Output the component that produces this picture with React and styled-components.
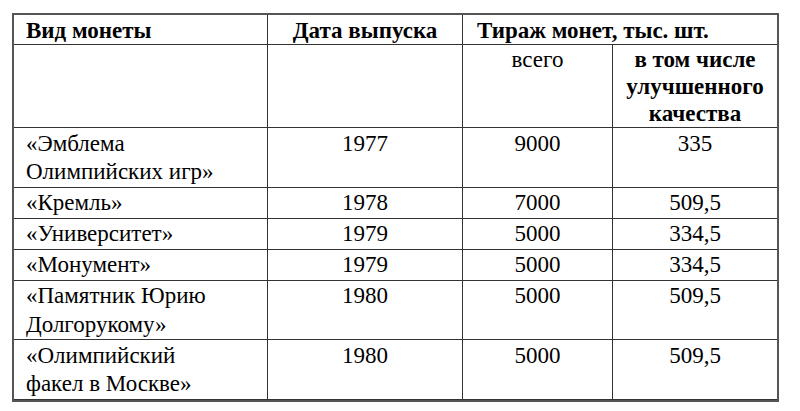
import React from "react";
import styled, { createGlobalStyle } from "styled-components";

const GlobalStyle = createGlobalStyle`
    body {
        margin: 0;
        background: #ffffff;
    }
`;

// line breaks follow the printed table
const coins = [
    { name: ["«Эмблема", "Олимпийских игр»"], year: "1977", total: "9000", proof: "335" },
    { name: ["«Кремль»"], year: "1978", total: "7000", proof: "509,5" },
    { name: ["«Университет»"], year: "1979", total: "5000", proof: "334,5" },
    { name: ["«Монумент»"], year: "1979", total: "5000", proof: "334,5" },
    { name: ["«Памятник Юрию", "Долгорукому»"], year: "1980", total: "5000", proof: "509,5" },
    { name: ["«Олимпийский", "факел в Москве»"], year: "1980", total: "5000", proof: "509,5" },
];

const App = () => {
    return (
        <Page>
            <GlobalStyle />
            <Table>
                <HeadCell $pad="12px">Вид монеты</HeadCell>
                <HeadCell $align="center">Дата выпуска</HeadCell>
                <HeadCell $span={2} $pad="14px" $last>Тираж монет, тыс. шт.</HeadCell>

                <SubCell />
                <SubCell />
                <SubCell $align="center" $light>всего</SubCell>
                <SubCell $align="center" $last>
                    в том числе
                    <br />
                    улучшенного
                    <br />
                    качества
                </SubCell>

                {coins.map((c) => (
                    <React.Fragment key={c.name.join(" ")}>
                        <Cell $pad="12px">
                            {c.name.map((line, i) => (
                                <React.Fragment key={line}>
                                    {i > 0 && <br />}
                                    {line}
                                </React.Fragment>
                            ))}
                        </Cell>
                        <Cell $align="center">{c.year}</Cell>
                        <Cell $align="center">{c.total}</Cell>
                        <Cell $align="center" $last>{c.proof}</Cell>
                    </React.Fragment>
                ))}
            </Table>
        </Page>
    );
};

const Page = styled.div`
    padding: 13px 0 0 12px;
`;

const Table = styled.div`
    display: grid;
    grid-template-columns: 254px 195px 150px 164px;
    width: 763px;
    border: 2px solid #555;
`;

const CellBase = styled.div`
    border-right: ${(p) => (p.$last ? "none" : "1px solid #333")};
    border-bottom: 1px solid #333;
    padding: 0 4px 0 ${(p) => p.$pad || "4px"};
    text-align: ${(p) => p.$align || "left"};
    font-family: "Liberation Serif";
    font-size: 23px;
    color: #000;
`;

const HeadCell = styled(CellBase)`
    grid-column: span ${(p) => p.$span || 1};
    padding-top: 2px;
    font-weight: bold;
    line-height: 27px;
`;

const SubCell = styled(CellBase)`
    height: 83px;
    box-sizing: border-box;
    padding-top: 1px;
    font-weight: ${(p) => (p.$light ? "normal" : "bold")};
    line-height: 27px;
`;

const Cell = styled(CellBase)`
    padding-top: 1.5px;
    line-height: 28.5px;
    white-space: nowrap;
`;

export default App;
